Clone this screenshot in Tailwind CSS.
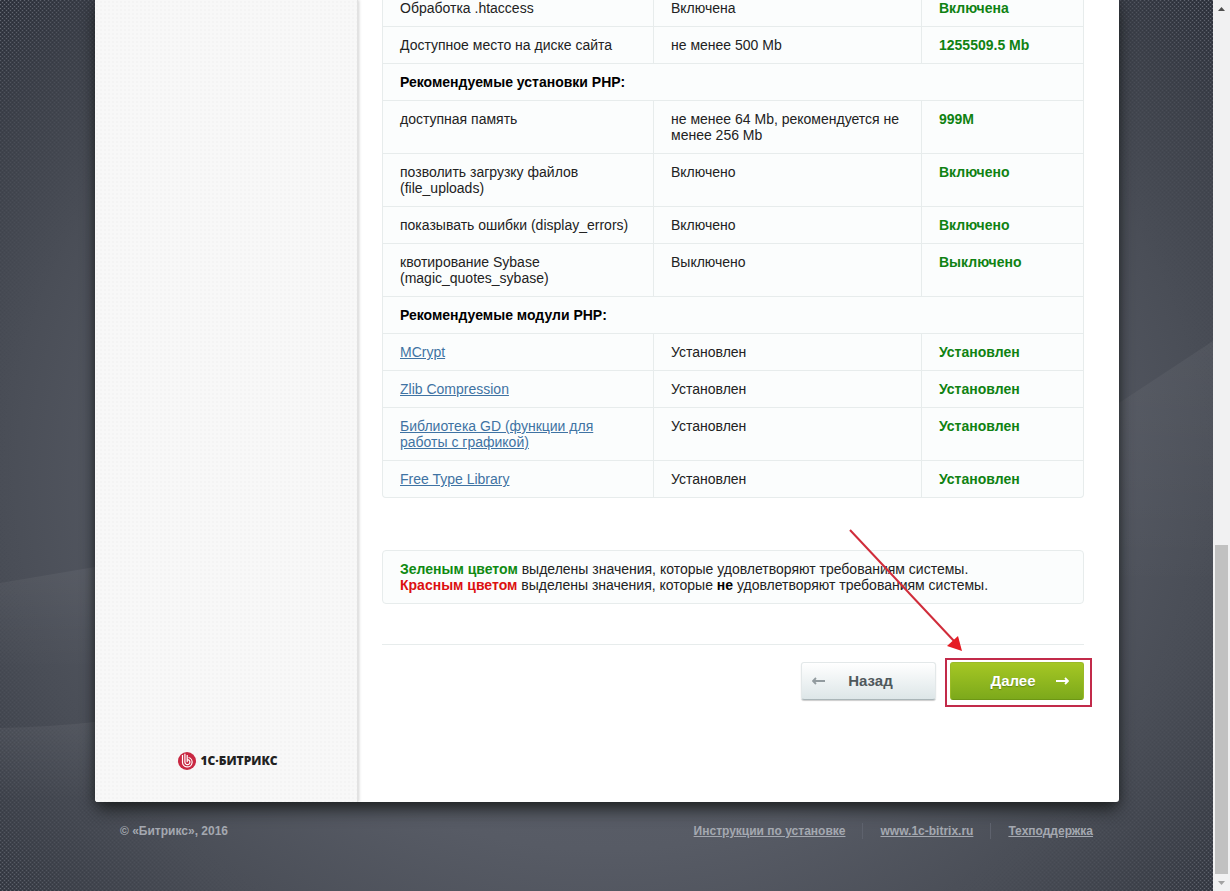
<!DOCTYPE html>
<html lang="ru">
<head>
<meta charset="utf-8">
<meta name="viewport" content="width=device-width, initial-scale=1">
<title>Предварительная проверка</title>
<script src="https://cdn.jsdelivr.net/npm/@tailwindcss/browser@4"></script>
</head>
<body class="flex h-screen overflow-hidden bg-[#4a4d56] font-['Liberation_Sans',Arial,sans-serif] text-sm leading-4 text-[#222]">

<div class="relative isolate flex-1 overflow-hidden pl-px">
  <!-- Page backdrop -->
  <svg class="absolute inset-0 -z-10 size-full" viewBox="0 0 1213 891" preserveAspectRatio="none" aria-hidden="true">
    <defs>
      <radialGradient id="glow" gradientUnits="userSpaceOnUse" cx="0" cy="0" r="1" gradientTransform="translate(606 480) scale(860 740)">
        <stop offset="0" stop-color="#626772"/>
        <stop offset=".5" stop-color="#575b65"/>
        <stop offset=".7" stop-color="#4a4e57"/>
        <stop offset=".84" stop-color="#3e424b"/>
        <stop offset="1" stop-color="#2e323d"/>
      </radialGradient>
      <radialGradient id="fade" gradientUnits="userSpaceOnUse" cx="0" cy="0" r="1" gradientTransform="translate(606 460) scale(800 700)">
        <stop offset=".74" stop-color="#000"/>
        <stop offset=".9" stop-color="#444"/>
        <stop offset="1" stop-color="#ddd"/>
      </radialGradient>
      <pattern id="dots" width="4" height="4" patternUnits="userSpaceOnUse">
        <path fill="#8a8f9a" d="M0 0h1v1h-1zM2 2h1v1h-1z"/>
        <path fill="#20242e" d="M2 0h1v1h-1zM0 2h1v1h-1z"/>
      </pattern>
      <mask id="corners"><rect width="1213" height="891" fill="url(#fade)"/></mask>
      <linearGradient id="beam" x1="0" y1="0" x2="0" y2="1">
        <stop offset="0" stop-color="#fff" stop-opacity=".05"/>
        <stop offset="1" stop-color="#fff" stop-opacity="0"/>
      </linearGradient>
    </defs>
    <rect width="1213" height="891" fill="url(#glow)"/>
    <rect width="1213" height="891" fill="url(#dots)" mask="url(#corners)" opacity=".7"/>
    <path fill="url(#beam)" d="M1119 403L1213 341V590H1119z"/>
    <path fill="url(#beam)" d="M0 583L95 567V670H0z"/>
    <path fill="url(#beam)" d="M0 728Q50 727 95 722V800H0z"/>
  </svg>

  <div class="mx-auto max-w-5xl">
    <main class="flex overflow-hidden rounded-b-[3px] bg-white shadow-[0_10px_16px_-2px_rgba(25,28,28,0.8),0_0_8px_rgba(25,28,28,0.5)]">
      <aside class="flex w-[263px] shrink-0 flex-col justify-end border-r border-[#e2e2e2] bg-[#f8f8f8] bg-[radial-gradient(#f4f4f4_1px,transparent_1px)] bg-size-[4px_4px] pb-8 shadow-[1px_0_3px_rgba(0,0,0,0.18)]">
        <div class="flex items-center justify-center gap-1 pl-1">
          <svg class="size-[18px]" viewBox="0 0 18 18" fill="none" aria-hidden="true">
            <circle cx="9" cy="9" r="9" fill="#c92842"/>
            <path stroke="#fff" stroke-width="1.2" d="M4.5 3v7a4.8 4.800 0 1 0 6-4.500M6.900 1.800v8.300a2.500 2.500 0 1 0 2.400-2.500M9.200 3v7.200"/>
          </svg>
          <span class="font-['Open_Sans',sans-serif] text-xs leading-4 font-extrabold text-[#222]">1С·БИТРИКС</span>
        </div>
      </aside>

      <section class="min-w-0 flex-1 pr-[35px] pb-[102px] pl-6">
        <div class="-mt-[10px] overflow-hidden rounded-b-[4px] border-x border-b border-[#e7ecec] bg-[#fbfdfd]">
          <table class="w-full table-fixed border-separate border-spacing-0 text-left [&_a]:text-[#3f73a3] [&_a]:underline [&_td]:border-b [&_td]:border-[#e7ecec] [&_td]:py-[10px] [&_td]:pr-3 [&_td]:pl-[17px] [&_td]:align-top [&_th]:border-b [&_th]:border-[#e7ecec] [&_th]:py-[10px] [&_th]:pl-[17px] [&_th]:text-black [&_td:first-child]:border-r [&_td:nth-child(2)]:border-r [&_td:last-child]:font-bold [&_td:last-child]:text-[#0f8212] [&_tr:last-child_td]:border-b-0">
            <colgroup><col class="w-[271px]"><col class="w-[268px]"><col></colgroup>
            <tbody>
              <tr><td>Обработка .htaccess</td><td>Включена</td><td>Включена</td></tr>
              <tr><td>Доступное место на диске сайта</td><td>не менее 500 Mb</td><td>1255509.5 Mb</td></tr>
              <tr><th colspan="3">Рекомендуемые установки PHP:</th></tr>
              <tr><td>доступная память</td><td>не менее 64 Mb, рекомендуется не менее 256 Mb</td><td>999M</td></tr>
              <tr><td>позволить загрузку файлов (file_uploads)</td><td>Включено</td><td>Включено</td></tr>
              <tr><td>показывать ошибки (display_errors)</td><td>Включено</td><td>Включено</td></tr>
              <tr><td>квотирование Sybase (magic_quotes_sybase)</td><td>Выключено</td><td>Выключено</td></tr>
              <tr><th colspan="3">Рекомендуемые модули PHP:</th></tr>
              <tr><td><a href="#">MCrypt</a></td><td>Установлен</td><td>Установлен</td></tr>
              <tr><td><a href="#">Zlib Compression</a></td><td>Установлен</td><td>Установлен</td></tr>
              <tr><td><a href="#">Библиотека GD (функции для работы с графикой)</a></td><td>Установлен</td><td>Установлен</td></tr>
              <tr><td><a href="#">Free Type Library</a></td><td>Установлен</td><td>Установлен</td></tr>
            </tbody>
          </table>
        </div>

        <div class="mt-[52px] rounded-[4px] border border-[#e7ecec] bg-[#fbfdfd] px-[17px] py-[10px]">
          <p><b class="text-[#0f8a12]">Зеленым цветом</b> выделены значения, которые удовлетворяют требованиям системы.</p>
          <p><b class="text-[#dc1010]">Красным цветом</b> выделены значения, которые <b class="text-black">не</b> удовлетворяют требованиям системы.</p>
        </div>

        <div class="relative mt-10 flex justify-end gap-[14px] border-t border-[#e7ecec] pt-[17px] text-[15px] font-bold">
          <button type="button" class="relative h-[38px] w-[135px] rounded-[3px] border border-[#e3e8e9] border-b-[#aab5b8] bg-linear-to-b from-white to-[#dde6e8] pl-1 text-[#4f585c] shadow-[0_1px_1px_rgba(0,0,0,0.2)]">
            <svg class="absolute top-3 left-[10px] h-3 w-[13px]" viewBox="0 0 13 12" fill="none" stroke="#929b9f" stroke-width="1.8" aria-hidden="true"><path d="M1 6h12M4 3L1 6l3 3"/></svg>
            Назад
          </button>
          <button type="button" class="relative h-[38px] w-[134px] rounded-[3px] border border-[#9aba26] border-b-[#6d9615] bg-linear-to-b from-[#a5c724] to-[#7ca91b] pr-2 text-white text-shadow-[0_1px_1px_rgba(60,90,0,0.5)]">
            Далее
            <svg class="absolute top-3 right-[14px] h-3 w-[13px]" viewBox="0 0 13 12" fill="none" stroke="#fff" stroke-width="1.8" aria-hidden="true"><path d="M0 6h12M9 3l3 3l-3 3"/></svg>
          </button>
          <!-- Callout: frame and arrow over the primary button -->
          <div class="pointer-events-none absolute top-[13px] -right-2 h-[49px] w-[147px] border-2 border-[#c22a4a]"></div>
          <svg class="pointer-events-none absolute -top-[116px] right-[121px] h-[124px] w-[114px]" viewBox="0 0 114 124" aria-hidden="true">
            <path stroke="#d02c3a" stroke-width="2" d="M1 1L105 112"/>
            <path fill="#e51c24" d="M113 122L98 117L109 107z"/>
          </svg>
        </div>
      </section>
    </main>

    <footer class="flex justify-between pt-[21px] pr-[26px] pl-[25px] text-xs leading-4 font-bold text-[#a4a8b0]">
      <span>© «Битрикс», 2016</span>
      <nav class="flex divide-x divide-[#5e626d] [&_a]:underline">
        <span class="pr-[17px]"><a href="#">Инструкции по установке</a></span>
        <span class="px-[17px]"><a href="#">www.1c-bitrix.ru</a></span>
        <span class="pl-[17px]"><a href="#">Техподдержка</a></span>
      </nav>
    </footer>
  </div>
</div>

<!-- Scrollbar -->
<div class="flex w-[17px] shrink-0 flex-col items-center bg-[#f1f1f2]" aria-hidden="true">
  <svg class="h-[17px] w-[17px] shrink-0" viewBox="0 0 17 17"><path fill="#505050" d="M5 11h7L8.500 7z"/></svg>
  <div class="grow-[528]"></div>
  <div class="w-[13px] grow-[329] bg-[#c1c1c1]"></div>
  <svg class="h-[17px] w-[17px] shrink-0" viewBox="0 0 17 17"><path fill="#a3a3a3" d="M5 7h7L8.500 11z"/></svg>
</div>
</body>
</html>
